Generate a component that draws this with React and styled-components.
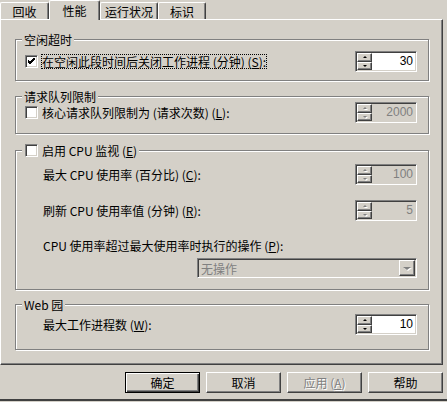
import React from "react";
import styled, { createGlobalStyle } from "styled-components";

const FACE = "#d4d0c8";
const SHADOW = "#808080";
const DARK = "#404040";

const GlobalStyle = createGlobalStyle`
  body { margin: 0; background: ${FACE}; }
  * { box-sizing: border-box; }
`;

const Dialog = styled.div`
  width: 447px;
  height: 401px;
  background: ${FACE};
  font-family: "Noto Sans CJK SC", "Noto Sans CJK JP", sans-serif;
  font-size: 12px;
  line-height: 13px;
  color: #000;
  border-bottom: 2px solid ${DARK};
  display: flex;
  flex-direction: column;
`;

const TabRow = styled.div`
  display: flex;
  align-items: flex-end;
  height: 19px;
`;

const Tab = styled.div`
  position: relative;
  z-index: ${(p) => (p.$active ? 1 : 0)};
  width: ${(p) => p.$w}px;
  height: ${(p) => (p.$active ? 20 : 17)}px;
  margin-bottom: ${(p) => (p.$active ? -1 : 0)}px;
  background: ${FACE};
  border-top: 1px solid #fff;
  border-left: 1px solid #fff;
  border-right: 1px solid ${DARK};
  box-shadow: inset -1px 0 0 ${SHADOW};
  border-radius: 2px 2px 0 0;
  display: flex;
  justify-content: center;
  padding-top: ${(p) => (p.$active ? 3 : 2)}px;
`;

const Panel = styled.div`
  width: 443px;
  height: 346px;
  border-top: 1px solid #fff;
  border-left: 1px solid #fff;
  border-right: 1px solid ${DARK};
  border-bottom: 1px solid ${DARK};
  box-shadow: inset -1px -1px 0 ${SHADOW};
  padding: 0 0 0 14px;
  display: flex;
  flex-direction: column;
`;

const Group = styled.div`
  margin-top: ${(p) => p.$mt}px;
  width: 414px;
  height: ${(p) => p.$h}px;
  border: 1px solid ${SHADOW};
  box-shadow: inset 1px 1px 0 #fff, 1px 1px 0 #fff;
  padding: 0 11px 0 9px;
  display: flex;
  flex-direction: column;
`;

const Legend = styled.div`
  align-self: flex-start;
  display: flex;
  align-items: center;
  gap: 4px;
  height: 13px;
  margin: -7px 0 0 -3px;
  padding: 0 2px 0 ${(p) => p.$pl || 2}px;
  background: ${FACE};
  white-space: pre;
`;

const Row = styled.div`
  display: flex;
  align-items: center;
  justify-content: space-between;
  height: ${(p) => p.$h || 21}px;
  margin-top: ${(p) => p.$mt}px;
  padding-left: ${(p) => p.$indent || 0}px;
`;

const CheckLine = styled.div`
  display: flex;
  align-items: center;
`;

const Box = styled.span`
  display: inline-flex;
  align-items: center;
  justify-content: center;
  width: 13px;
  height: 13px;
  flex: none;
  background: #fff;
  border: 1px solid;
  border-color: ${SHADOW} #fff #fff ${SHADOW};
  box-shadow: inset 1px 1px 0 ${DARK}, inset -1px -1px 0 ${FACE};
`;

const Label = styled.span`
  margin-left: ${(p) => p.$ml || 0}px;
  padding: 1px 1px;
  outline: ${(p) => (p.$focus ? "1px dotted #000" : "none")};
  outline-offset: -1px;
  white-space: pre;
`;

const SpinBox = styled.div`
  display: flex;
  width: 62px;
  height: 21px;
  padding: 1px;
  border: 1px solid;
  border-color: ${SHADOW} #fff #fff ${SHADOW};
  box-shadow: inset 1px 1px 0 ${DARK}, inset -1px -1px 0 ${FACE};
  background: ${(p) => (p.$disabled ? FACE : "#fff")};
`;

const SpinButtons = styled.div`
  display: flex;
  flex-direction: column;
  width: 15px;
  flex: none;
`;

const SpinButton = styled.div`
  flex: 1;
  display: flex;
  align-items: center;
  justify-content: center;
  background: ${FACE};
  border: 1px solid;
  border-color: #fff ${DARK} ${DARK} #fff;
  box-shadow: inset -1px -1px 0 ${SHADOW};
`;

const Arrow = styled.span`
  width: 0;
  height: 0;
  border-left: ${(p) => p.$size || 2}px solid transparent;
  border-right: ${(p) => p.$size || 2}px solid transparent;
  ${(p) => (p.$up ? "border-bottom" : "border-top")}: ${(p) => (p.$size ? p.$size - 1 : 2)}px solid
    ${(p) => (p.$disabled ? SHADOW : "#000")};
  filter: ${(p) => (p.$disabled ? "drop-shadow(1px 1px 0 #fff)" : "none")};
`;

const SpinValue = styled.div`
  flex: 1;
  text-align: right;
  padding: 2px 2px 0 0;
  font-family: "Liberation Sans", Arial, sans-serif;
  font-size: 12px;
  color: ${(p) => (p.$disabled ? SHADOW : "#000")};
`;

const Select = styled.div`
  display: flex;
  align-items: center;
  width: 220px;
  height: 20px;
  padding: 1px;
  border: 1px solid;
  border-color: ${SHADOW} #fff #fff ${SHADOW};
  box-shadow: inset 1px 1px 0 ${DARK}, inset -1px -1px 0 ${FACE};
  background: ${FACE};
  color: ${SHADOW};
`;

const SelectText = styled.span`
  flex: 1;
  padding-left: 2px;
`;

const SelectButton = styled.div`
  width: 16px;
  height: 16px;
  display: flex;
  align-items: center;
  justify-content: center;
  border: 1px solid;
  border-color: #fff ${DARK} ${DARK} #fff;
  box-shadow: inset -1px -1px 0 ${SHADOW};
`;

const RightAlign = styled.div`
  display: flex;
  justify-content: flex-end;
  margin-top: ${(p) => p.$mt}px;
`;

const ButtonRow = styled.div`
  display: flex;
  justify-content: flex-end;
  gap: 6px;
  margin-top: 7px;
  padding-right: 4px;
`;

const Button = styled.div`
  width: 75px;
  height: 21px;
  display: flex;
  align-items: center;
  justify-content: center;
  white-space: pre;
  border: 1px solid;
  border-color: ${(p) => (p.$default ? "#000" : `#fff ${DARK} ${DARK} #fff`)};
  box-shadow: ${(p) =>
    p.$default
      ? `inset 1px 1px 0 #fff, inset -1px -1px 0 ${DARK}, inset -2px -2px 0 ${SHADOW}`
      : `inset -1px -1px 0 ${SHADOW}`};
  color: ${(p) => (p.$disabled ? SHADOW : "#000")};
  text-shadow: ${(p) => (p.$disabled ? "1px 1px 0 #fff" : "none")};
`;

const Check = ({ checked }) => (
  <Box>
    {checked && (
      <svg width="7" height="7" viewBox="0 0 7 7">
        <path d="M0 2 L2 4 L7 -1 M0 3 L2 5 L7 0 M0 4 L2 6 L7 1" stroke="#000" strokeWidth="1" fill="none" />
      </svg>
    )}
  </Box>
);

const Spin = ({ value, disabled }) => (
  <SpinBox $disabled={disabled}>
    <SpinButtons>
      <SpinButton>
        <Arrow $up $disabled={disabled} />
      </SpinButton>
      <SpinButton>
        <Arrow $disabled={disabled} />
      </SpinButton>
    </SpinButtons>
    <SpinValue $disabled={disabled}>{value}</SpinValue>
  </SpinBox>
);

export default function App() {
  return (
    <Dialog>
      <GlobalStyle />
      <TabRow>
        <Tab $w={49}>回收</Tab>
        <Tab $w={51} $active>性能</Tab>
        <Tab $w={58}>运行状况</Tab>
        <Tab $w={48}>标识</Tab>
      </TabRow>
      <Panel>
        <Group $mt={19} $h={42}>
          <Legend>空闲超时</Legend>
          <Row $mt={5}>
            <CheckLine>
              <Check checked />
              <Label $ml={3} $focus>
                在空闲此段时间后关闭工作进程 (分钟) (<u>S</u>):
              </Label>
            </CheckLine>
            <Spin value="30" />
          </Row>
        </Group>

        <Group $mt={15} $h={38}>
          <Legend>请求队列限制</Legend>
          <Row $mt={-1}>
            <CheckLine>
              <Check />
              <Label $ml={3}>核心请求队列限制为 (请求次数) (<u>L</u>):</Label>
            </CheckLine>
            <Spin value="2000" disabled />
          </Row>
        </Group>

        <Group $mt={16} $h={140}>
          <Legend $pl={3}>
            <Check />
            <span>启用 CPU 监视 (<u>E</u>)</span>
          </Legend>
          <Row $mt={7} $indent={17}>
            <Label>最大 CPU 使用率 (百分比) (<u>C</u>):</Label>
            <Spin value="100" disabled />
          </Row>
          <Row $mt={15} $indent={17}>
            <Label>刷新 CPU 使用率值 (分钟) (<u>R</u>):</Label>
            <Spin value="5" disabled />
          </Row>
          <Row $mt={17} $h={14} $indent={17}>
            <Label>CPU 使用率超过最大使用率时执行的操作 (<u>P</u>):</Label>
          </Row>
          <RightAlign $mt={6}>
            <Select>
              <SelectText>无操作</SelectText>
              <SelectButton>
                <Arrow $size={4} $disabled />
              </SelectButton>
            </Select>
          </RightAlign>
        </Group>

        <Group $mt={14} $h={46}>
          <Legend>Web 园</Legend>
          <Row $mt={3} $indent={17}>
            <Label>最大工作进程数 (<u>W</u>):</Label>
            <Spin value="10" />
          </Row>
        </Group>
      </Panel>
      <ButtonRow>
        <Button $default>确定</Button>
        <Button>取消</Button>
        <Button $disabled>应用 (<u>A</u>)</Button>
        <Button>帮助</Button>
      </ButtonRow>
    </Dialog>
  );
}
